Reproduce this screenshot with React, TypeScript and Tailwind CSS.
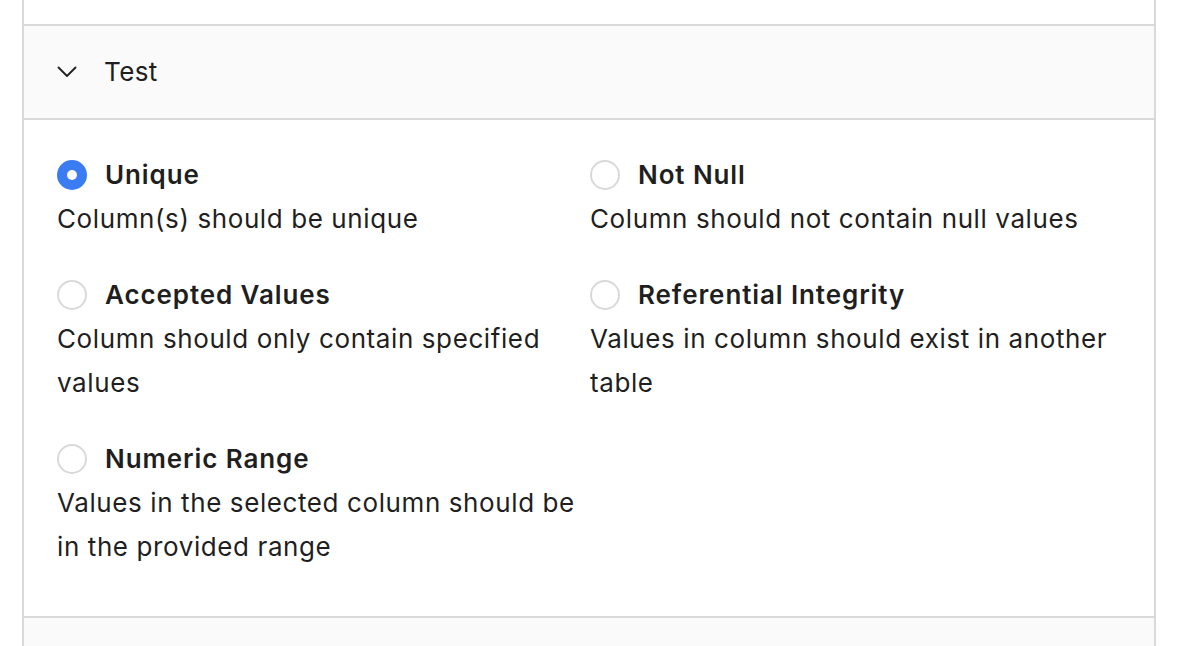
type TestOption = {
    id: string;
    title: string;
    description: string;
};

const options: TestOption[] = [
    { id: 'unique', title: 'Unique', description: 'Column(s) should be unique' },
    { id: 'not_null', title: 'Not Null', description: 'Column should not contain null values' },
    { id: 'accepted_values', title: 'Accepted Values', description: 'Column should only contain specified values' },
    { id: 'relationships', title: 'Referential Integrity', description: 'Values in column should exist in another table' },
    { id: 'range', title: 'Numeric Range', description: 'Values in the selected column should be in the provided range' },
];

const Radio = ({ checked }: { checked: boolean }) =>
    checked ? (
        <span className="flex h-[30px] w-[30px] shrink-0 items-center justify-center rounded-full bg-[#3c7cf2]">
            <span className="h-[10px] w-[10px] rounded-full bg-white" />
        </span>
    ) : (
        <span className="h-[30px] w-[30px] shrink-0 rounded-full border-2 border-[#d9d9d9] bg-white" />
    );

const App = () => {
    const selected = 'unique';

    return (
        <div className="h-[646px] w-full overflow-hidden bg-white text-[#1f1f1f] [font-family:Inter,'Noto_Sans',sans-serif]">
            <div className="ml-[22px] flex h-full w-[1134px] flex-col border-x-2 border-[#d9d9d9]">
                <div className="h-[26px] shrink-0 border-b-2 border-[#d9d9d9] bg-white" />
                <div className="flex h-[94px] shrink-0 items-center border-b-2 border-[#d9d9d9] bg-[#fafafa] pl-[33px]">
                    <svg width="20" height="12" viewBox="0 0 20 12" fill="none" className="text-[#222]">
                        <path d="M1.5 1.5 L10 10 L18.5 1.5" stroke="currentColor" strokeWidth="1.9" strokeLinecap="round" strokeLinejoin="round" />
                    </svg>
                    <span className="ml-[27px] text-[26px] leading-none tracking-[0.4px]">Test</span>
                </div>
                <div className="grid shrink-0 grid-cols-2 gap-y-[39px] border-b-2 border-[#d9d9d9] pb-[47px] pl-[33px] pr-[31px] pt-[40px]">
                    {options.map((option) => (
                        <label key={option.id} className="block pr-[8px]">
                            <div className="flex h-[30px] items-center gap-[18px]">
                                <Radio checked={option.id === selected} />
                                <span className="text-[26px] font-semibold leading-none tracking-[0.9px]">{option.title}</span>
                            </div>
                            <p className="mt-[7px] text-[26px] leading-[44px] tracking-[0.6px]">{option.description}</p>
                        </label>
                    ))}
                </div>
                <div className="flex-1 bg-[#fafafa]" />
            </div>
        </div>
    );
};

export default App;
